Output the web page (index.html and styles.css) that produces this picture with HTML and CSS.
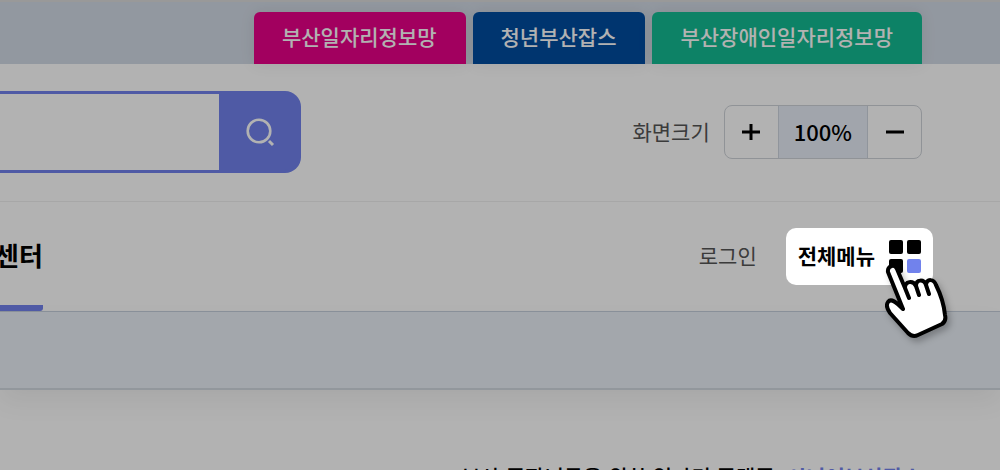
FILE: index.html
```html
<!DOCTYPE html>
<html lang="ko">
<head>
    <meta charset="UTF-8">
    <meta name="viewport" content="width=device-width, initial-scale=1.0">
    <title>전체메뉴</title>
    <link rel="stylesheet" href="styles.css">
</head>
<body>
<header>
    <!-- 관련 사이트 -->
    <nav class="site-links" aria-label="관련 사이트">
        <a class="site-link job" href="#">부산일자리정보망</a>
        <a class="site-link youth" href="#">청년부산잡스</a>
        <a class="site-link disabled" href="#">부산장애인일자리정보망</a>
    </nav>

    <!-- 검색, 화면크기 -->
    <div class="tools">
        <form class="search">
            <input type="text" aria-label="검색어">
            <button type="submit" aria-label="검색">
                <svg width="32" height="32" viewBox="0 0 32 32" fill="none" stroke="#fff" stroke-width="2.6">
                    <circle cx="16" cy="15" r="11.3"/>
                    <path d="M26 25l4 4" stroke-width="3"/>
                </svg>
            </button>
        </form>
        <div class="zoom">
            <span>화면크기</span>
            <div class="zoom-box">
                <button type="button" aria-label="확대">
                    <svg width="18" height="18" viewBox="0 0 18 18" stroke="#000" stroke-width="3"><path d="M9 1v16M0 9h18"/></svg>
                </button>
                <output>100%</output>
                <button type="button" aria-label="축소">
                    <svg width="18" height="18" viewBox="0 0 18 18" stroke="#000" stroke-width="3"><path d="M0 9h18"/></svg>
                </button>
            </div>
        </div>
    </div>

    <!-- 메인 메뉴 -->
    <nav class="gnb" aria-label="메인 메뉴">
        <a class="gnb-item" href="#">센터</a>
        <div class="gnb-side">
            <a class="login" href="#">로그인</a>
            <button class="all-menu" type="button">
                <span>전체메뉴</span>
                <svg class="grid-icon" width="32" height="34" viewBox="0 0 32 34">
                    <rect width="14" height="14" rx="2"/>
                    <rect x="18" width="14" height="14" rx="2"/>
                    <rect y="19" width="14" height="14" rx="2"/>
                    <rect x="18" y="19" width="14" height="14" rx="2" fill="#7182ec"/>
                </svg>
                <svg class="hand" width="64" height="78" viewBox="0 0 64 78">
                    <path d="M2 9C1 3 9 1 11 6L20 26C20 19 28 18 31 24C31 17 39 17 41 23C42 16 49 17 51 23C57 34 59 45 61 53C62 57 60 60 57 62L34 73C30 75 27 74 24 72L5 51C2 47 0 43 2 40C5 37 11 40 18 47L14 37Z"
                          fill="#fff"/>
                    <path d="M18 47C11 40 6 36 3 40C1 43 2 47 5 51L23 71C26 74 29 75 33 73L57 62C60 60 61 57 60 53C59 43 56 33 51 23C49 17 42 16 41 23C39 17 31 17 31 24C28 18 20 19 20 26L12 7C10 1 2 4 3 10L18 47M20 26L24 36M31 24L34 33M41 23L44 32"
                          fill="none" stroke="#000" stroke-width="4" stroke-linecap="round" stroke-linejoin="round"/>
                </svg>
            </button>
        </div>
    </nav>
    <div class="sub-bar"></div>
</header>

<main>
    <p class="slogan">부산 중장년들을 위한 일자리 플랫폼, <strong>시니어부산잡스</strong></p>
</main>
<div class="dim"></div>
</body>
</html>
```
FILE: styles.css
```css
* {
    box-sizing: border-box;
}
body {
    margin: 0;
    height: 100vh;
    overflow: hidden;
    background: #fff;
    color: #000;
    font-family: "Noto Sans CJK KR", sans-serif;
    font-size: 21px;
    line-height: 32px;
}
a {
    color: inherit;
    text-decoration: none;
}
button {
    display: flex;
    align-items: center;
    justify-content: center;
    border: none;
    background: none;
    font: inherit;
    cursor: pointer;
}
.site-links {
    display: flex;
    justify-content: flex-end;
    gap: 7px;
    padding: 10px 78px 0 0;
    border-top: 2px solid #dcdcdc;
    background: #d2dae5;
}
.site-link {
    padding: 8px 29px 12px 28px;
    border-radius: 6px 6px 0 0;
    color: #fff;
    font-weight: 500;
    box-shadow: 0 0 16px rgba(0, 0, 0, 0.08);
}
.job {
    background: #e90088;
}
.youth {
    background: #004ca0;
}
.disabled {
    background: #14ba92;
}
.tools {
    display: flex;
    align-items: center;
    justify-content: space-between;
    padding: 27px 78px 28px 0;
    border-bottom: 1px solid #f0f0f0;
}
.search {
    display: flex;
    width: 301px;
    height: 82px;
    border: 3px solid #7182ec;
    border-left: none;
    border-radius: 0 16px 16px 0;
    background: #7182ec;
}
.search input {
    flex: 1;
    min-width: 0;
    border: none;
    background: #fff;
    font: inherit;
}
.search button {
    width: 79px;
}
.zoom {
    display: flex;
    align-items: center;
    gap: 14px;
    color: #555;
}
.zoom span {
    padding-bottom: 2px;
}
.zoom-box {
    display: flex;
    height: 54px;
    overflow: hidden;
    border: 1px solid #cfd3d9;
    border-radius: 8px;
}
.zoom-box button {
    width: 53px;
    padding: 0;
}
.zoom-box output {
    padding: 9px 15px;
    border: solid #cfd6e0;
    border-width: 0 1px;
    background: #e7edf7;
    color: #000;
    font-size: 22px;
    font-weight: 500;
}
.gnb {
    display: flex;
    justify-content: space-between;
    height: 110px;
    padding-right: 67px;
    border-bottom: 1px solid #c7d0dd;
}
.gnb-item {
    padding-top: 37px;
    border-bottom: 6px solid #7182ec;
    border-radius: 0 0 3px 0;
    margin-left: -5px;
    font-size: 26px;
    font-weight: 700;
}
.gnb-side {
    display: flex;
    align-items: center;
    gap: 29px;
}
.login {
    padding-bottom: 4px;
    color: #555;
}
.all-menu {
    position: relative;
    z-index: 2;
    gap: 14px;
    height: 57px;
    padding: 0 12px;
    border-radius: 10px;
    background: #fff;
    color: #000;
    font-weight: 700;
}
.all-menu span {
    padding-bottom: 4px;
}
.hand {
    position: absolute;
    top: 34px;
    right: -16px;
    filter: drop-shadow(3px 4px 3px rgba(0, 0, 0, 0.25));
}
.sub-bar {
    height: 78px;
    border-bottom: 2px solid #d2d8e0;
    background: #eaf0f7;
    box-shadow: 0 12px 24px rgba(0, 0, 0, 0.06);
}
.slogan {
    margin: 70px 78px 0 0;
    text-align: right;
    font-weight: 500;
}
.slogan strong {
    color: #7182ec;
}
.dim {
    position: fixed;
    inset: 0;
    z-index: 1;
    background: rgba(0, 0, 0, 0.3);
}
```
